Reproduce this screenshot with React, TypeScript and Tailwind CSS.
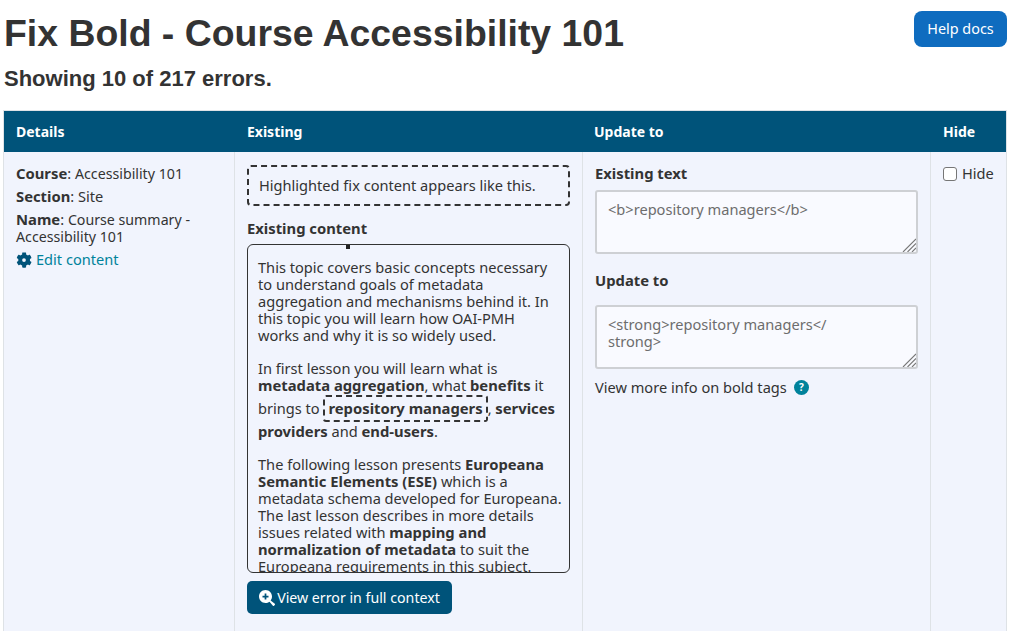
const bodyFont = "font-['Noto_Sans','Open_Sans',sans-serif]"

/** Gear glyph in front of the edit link */
function CogIcon() {
  return (
    <svg viewBox="0 0 512 512" className="w-4 h-4 fill-[#005379] shrink-0" aria-hidden="true">
      <path d="M487 315l-42-25a190 190 0 0 0 0-68l42-25c5-3 7-9 6-14-11-35-30-67-54-93-4-4-10-5-15-2l-42 24a188 188 0 0 0-59-34V30c0-6-4-11-9-12-36-8-73-8-107 0-6 1-10 6-10 12v48a194 194 0 0 0-59 34L96 88c-5-3-11-2-15 2-24 26-43 58-54 93-2 5 1 11 6 14l42 25a190 190 0 0 0 0 68l-42 25c-5 3-7 9-6 14 11 35 30 67 54 93 4 4 10 5 15 2l42-24a188 188 0 0 0 59 34v48c0 6 4 11 10 12 36 8 73 8 107 0 5-1 9-6 9-12v-48a194 194 0 0 0 59-34l42 24c5 3 11 2 15-2 24-26 43-58 54-93 1-5-1-11-6-14zM256 316a60 60 0 1 1 0-120 60 60 0 0 1 0 120z" />
    </svg>
  )
}

/** Solid magnifier with a plus cut out, used on the context button */
function SearchPlusIcon() {
  return (
    <svg viewBox="0 0 512 512" className="w-4 h-4 fill-white shrink-0" aria-hidden="true">
      <path fillRule="evenodd" d="M208 0C93 0 0 93 0 208s93 208 208 208c48 0 93-16 128-44l108 132c9 9 25 9 34 0l28-28c9-8 9-23 0-33L372 336c28-35 44-80 44-128C416 93 323 0 208 0zm-28 112h56v68h68v56h-68v68h-56v-68h-68v-56h68z" />
    </svg>
  )
}

/** Static stand-in for a textarea so the wrapped text and grip match */
function FakeTextarea({ children }: { children: React.ReactNode }) {
  return (
    <div className="relative h-[64px] bg-[#f9faff] border-2 border-[#ced0d4] rounded-[3px] pl-[11px] pr-2 py-[9px] leading-[17px] text-[#6d6d6d]">
      {children}
      <svg viewBox="0 0 14 14" className="absolute right-0 bottom-0 w-[14px] h-[14px] stroke-[#777777]" aria-hidden="true">
        <path d="M1 14 14 1M5.500 14 14 5.500M10 14l4-4" strokeWidth="1.1" />
      </svg>
    </div>
  )
}

export default function App() {
  return (
    <div className={`h-[631px] overflow-hidden bg-white text-[#333333] ${bodyFont}`}>
      {/* Page heading */}
      <div className="flex justify-between items-start pl-1 pr-[3px] pt-[11px]">
        <div className="font-['Liberation_Sans',Arial,sans-serif] font-bold">
          <h1 className="text-[37.400px] leading-[44px]">Fix Bold - Course Accessibility 101</h1>
          <h2 className="text-[22px] leading-[24px] mt-[12px]">Showing 10 of 217 errors.</h2>
        </div>
        <button className="h-9 w-[93px] rounded-lg bg-[#0f6cbf] text-white text-[14.400px]">Help docs</button>
      </div>

      {/* Error table */}
      <div className="mt-[19px] mx-[3px] border border-[#dee2e6] border-b-0 text-[14.600px] leading-[17px] [&_strong]:text-[14.800px] [&_h3]:text-[14.800px]">
        <div className="flex h-[41px] items-center bg-[#00537a] text-white text-[14px] font-bold">
          <div className="w-[231px] pl-3">Details</div>
          <div className="w-[348px] pl-3">Existing</div>
          <div className="w-[348px] pl-[11px]">Update to</div>
          <div className="pl-3">Hide</div>
        </div>

        <div className="flex h-[479px] bg-[#f1f4fd]">
          {/* Details */}
          <div className="w-[231px] px-3 pt-[13px] border-r border-[#dee2e6]">
            <p><strong>Course</strong>: <span className="text-[14.200px]">Accessibility 101</span></p>
            <p className="mt-1.5"><strong>Section</strong>: Site</p>
            <p className="mt-1.5"><strong>Name</strong>: <span className="text-[14.200px]">Course summary - Accessibility 101</span></p>
            <a className="mt-1.5 flex items-center gap-1 text-[#00829b]">
              <CogIcon />
              Edit content
            </a>
          </div>

          {/* Existing */}
          <div className="w-[348px] px-3 pt-[13px] border-r border-[#dee2e6]">
            <div className="h-[41px] flex items-center pl-[10px] border-2 border-dashed border-[#333333] rounded-[4px]">
              Highlighted fix content appears like this.
            </div>
            <h3 className="mt-[14px] font-bold">Existing content</h3>
            <div className="relative mt-[7px] h-[329px] overflow-hidden border border-[#333333] rounded-[6px] pl-2.5 pr-[6px] pt-[14px]">
              <span className="absolute left-[98px] top-0 w-1 h-1 bg-[#222222]" />
              <p className="pr-[6px]">
                This topic covers basic concepts necessary to understand goals of metadata aggregation and mechanisms behind it. In this topic you will learn how OAI-PMH works and why it is so widely used.
              </p>
              <p className="mt-[16px]">
                In first lesson you will learn what is <strong>metadata aggregation</strong>, what <strong>benefits</strong> it brings to{" "}
                <strong className="inline-block leading-[23px] my-px px-[3px] border-2 border-dashed border-[#333333] rounded-[3px]">repository managers</strong>,{" "}
                <strong>services providers</strong> and <strong>end-users</strong>.
              </p>
              <p className="mt-[16px]">
                The following lesson presents <strong>Europeana Semantic Elements (ESE)</strong> which is a metadata schema developed for Europeana. The last lesson describes in more details issues related with <strong>mapping and normalization of metadata</strong> to suit the Europeana requirements in this subject.
              </p>
            </div>
            <button className="mt-2 h-[33px] w-[205px] flex items-center justify-center gap-0.5 rounded-[5px] bg-[#00537a] text-white text-[14.200px]">
              <SearchPlusIcon />
              View error in full context
            </button>
          </div>

          {/* Update to */}
          <div className="w-[348px] px-3 pt-[13px] border-r border-[#dee2e6]">
            <h3 className="font-bold">Existing text</h3>
            <div className="mt-2 w-[323px]">
              <FakeTextarea>&lt;b&gt;repository managers&lt;/b&gt;</FakeTextarea>
            </div>
            <h3 className="mt-[18px] font-bold">Update to</h3>
            <div className="mt-4 w-[323px]">
              <FakeTextarea>&lt;strong&gt;repository managers&lt;/<br />strong&gt;</FakeTextarea>
            </div>
            <p className="mt-[10px] flex items-center gap-[7px]">
              View more info on bold tags
              <span className="w-[15px] h-[15px] rounded-full bg-[#00829b] text-white text-[10px] leading-[15px] font-bold text-center">?</span>
            </p>
          </div>

          {/* Hide */}
          <div className="flex-1 pl-3 pt-[13px]">
            <label className="flex items-center gap-[5px]">
              <span className="w-[14px] h-[14px] bg-white border border-[#767676] rounded-[3px]" />
              Hide
            </label>
          </div>
        </div>
      </div>
    </div>
  )
}
